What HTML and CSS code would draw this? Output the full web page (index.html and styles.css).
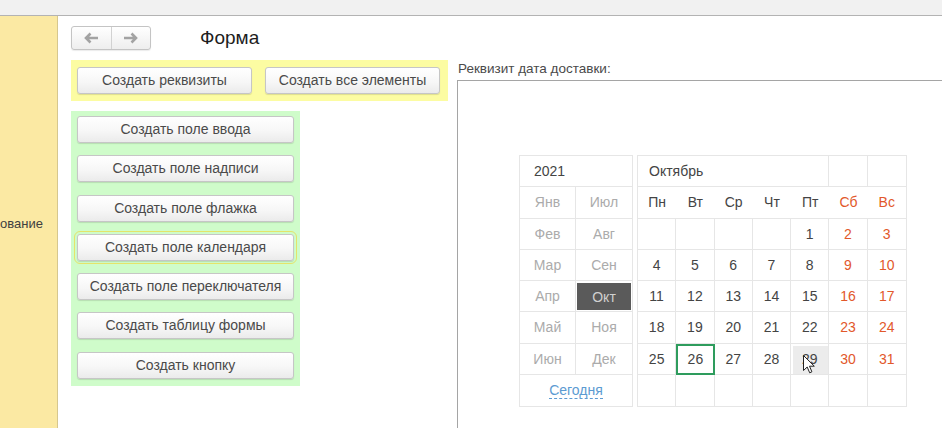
FILE: index.html
```html
<!DOCTYPE html>
<html lang="ru">
<head>
<meta charset="utf-8">
<title>Форма</title>
<link rel="stylesheet" href="styles.css">
</head>
<body>
<div class="app">
  <div class="topbar"></div>
  <div class="workspace">
    <aside class="side"><span class="side-text">ование</span></aside>
    <main class="main">
      <div class="header">
        <div class="nav">
          <button class="nav-btn" type="button" aria-label="Назад">
            <svg width="16" height="12" viewBox="0 0 16 12"><path d="M15 6H3M7.5 1.5L3 6l4.5 4.5" fill="none" stroke="#a3a3a3" stroke-width="2.6"/></svg>
          </button>
          <button class="nav-btn" type="button" aria-label="Вперёд">
            <svg width="16" height="12" viewBox="0 0 16 12"><path d="M1 6h12M8.5 1.5L13 6l-4.5 4.5" fill="none" stroke="#a3a3a3" stroke-width="2.6"/></svg>
          </button>
        </div>
        <h1 class="title">Форма</h1>
      </div>
      <div class="content">
        <div class="left">
          <div class="group group-yellow">
            <button class="btn btn-wide" type="button">Создать реквизиты</button>
            <button class="btn btn-wide" type="button">Создать все элементы</button>
          </div>
          <div class="group group-green">
            <button class="btn" type="button">Создать поле ввода</button>
            <button class="btn" type="button">Создать поле надписи</button>
            <button class="btn" type="button">Создать поле флажка</button>
            <button class="btn btn-focus" type="button">Создать поле календаря</button>
            <button class="btn" type="button">Создать поле переключателя</button>
            <button class="btn" type="button">Создать таблицу формы</button>
            <button class="btn" type="button">Создать кнопку</button>
          </div>
        </div>
        <div class="right">
          <div class="field-label">Реквизит дата доставки:</div>
          <div class="field">
            <div class="calendar">
              <div class="months">
                <div class="m-head">2021</div>
                <div class="m l">Янв</div><div class="m">Июл</div>
                <div class="m l">Фев</div><div class="m">Авг</div>
                <div class="m l">Мар</div><div class="m">Сен</div>
                <div class="m l">Апр</div><div class="m sel"><span>Окт</span></div>
                <div class="m l">Май</div><div class="m">Ноя</div>
                <div class="m l">Июн</div><div class="m">Дек</div>
                <div class="m-today"><a class="today-link" href="#">Сегодня</a></div>
              </div>
              <div class="days">
                <div class="d-head">Октябрь</div><div class="d-hcell r"></div><div class="d-hcell"></div>
                <div class="dn">Пн</div><div class="dn">Вт</div><div class="dn">Ср</div><div class="dn">Чт</div><div class="dn">Пт</div><div class="dn we">Сб</div><div class="dn we">Вс</div>

                <div class="d r"></div><div class="d r"></div><div class="d r"></div><div class="d r"></div><div class="d r">1</div><div class="d r we">2</div><div class="d we">3</div>
                <div class="d r">4</div><div class="d r">5</div><div class="d r">6</div><div class="d r">7</div><div class="d r">8</div><div class="d r we">9</div><div class="d we">10</div>
                <div class="d r">11</div><div class="d r">12</div><div class="d r">13</div><div class="d r">14</div><div class="d r">15</div><div class="d r we">16</div><div class="d we">17</div>
                <div class="d r">18</div><div class="d r">19</div><div class="d r">20</div><div class="d r">21</div><div class="d r">22</div><div class="d r we">23</div><div class="d we">24</div>
                <div class="d r">25</div><div class="d r today">26</div><div class="d r">27</div><div class="d r">28</div><div class="d r hover">29</div><div class="d r we">30</div><div class="d we">31</div>
                <div class="d r last"></div><div class="d r last"></div><div class="d r last"></div><div class="d r last"></div><div class="d r last"></div><div class="d r last"></div><div class="d last"></div>

                <svg class="cursor" width="12" height="19" viewBox="0 0 12 19"><path d="M0.5 0.5V15.5L4.2 12L6.7 17.8L8.9 16.8L6.5 11.2H11.3Z" fill="#fff" stroke="#222" stroke-width="1"/></svg>
              </div>
            </div>
          </div>
        </div>
      </div>
    </main>
  </div>
</div>
</body>
</html>
```

FILE: styles.css
```css
* { box-sizing: border-box; }
html, body {
  margin: 0;
  padding: 0;
  height: 428px;
  overflow: hidden;
  background: #fff;
  font-family: "Liberation Sans", Arial, sans-serif;
}
.app {
  display: flex;
  flex-direction: column;
  height: 428px;
}
.topbar {
  height: 16px;
  flex: none;
  background: #f1f1f1;
  border-bottom: 1px solid #b3b3b3;
}
.workspace {
  flex: 1;
  display: flex;
  min-height: 0;
}
.side {
  width: 58px;
  flex: none;
  background: #fbe9a3;
  border-right: 1px solid #d6c78e;
  padding-top: 199px;
  overflow: hidden;
}
.side-text {
  display: block;
  font-size: 13px;
  color: #404040;
  line-height: 18px;
  white-space: nowrap;
  margin-left: 0;
}
.main {
  flex: 1;
  min-width: 0;
  padding: 10px 0 0 13px;
  overflow: hidden;
}
.header {
  display: flex;
  align-items: center;
  height: 24px;
}
.nav {
  display: flex;
  width: 80px;
  height: 24px;
  border: 1px solid #c4c4c4;
  border-radius: 3px;
  background: linear-gradient(#ffffff, #eeeeee);
  box-shadow: 0 1px 1px rgba(0,0,0,0.08);
  overflow: hidden;
}
.nav-btn {
  flex: 1;
  border: 0;
  padding: 0;
  margin: 0;
  background: transparent;
  display: flex;
  align-items: center;
  justify-content: center;
}
.nav-btn + .nav-btn { border-left: 1px solid #d2d2d2; }
.title {
  margin: 0 0 0 49px;
  font-size: 19px;
  font-weight: normal;
  color: #1d1d1d;
  line-height: 24px;
}
.content {
  display: flex;
  margin-top: 10px;
  gap: 9px;
}
.left {
  width: 377px;
  flex: none;
  display: flex;
  flex-direction: column;
  align-items: flex-start;
  gap: 10px;
}
.group {
  display: flex;
}
.group-yellow {
  width: 377px;
  background: #fcfca2;
  padding: 7px 8px 7px 6px;
  gap: 13px;
}
.group-green {
  width: 229px;
  flex-direction: column;
  background: #cffcca;
  padding: 5px 6px 7px 6px;
  gap: 12.3px;
}
.btn {
  height: 27px;
  width: 217px;
  border: 1px solid #c6c6c6;
  border-radius: 3px;
  background: linear-gradient(#ffffff 0%, #f7f7f7 55%, #ebebeb 100%);
  box-shadow: 0 1px 1px rgba(0,0,0,0.12);
  font-family: "Liberation Sans", Arial, sans-serif;
  font-size: 14px;
  color: #4a4a4a;
  padding: 0;
  margin: 0;
  line-height: 25px;
}
.btn-wide { width: 175px; }
.btn-focus {
  outline: 1px solid #e4e46a;
  outline-offset: 2px;
}
.right {
  flex: 1;
  min-width: 0;
  display: flex;
  flex-direction: column;
}
.field-label {
  font-size: 13.5px;
  color: #4a4a4a;
  line-height: 18px;
  margin-left: 1px;
}
.field {
  margin-top: 2px;
  width: 600px;
  height: 400px;
  border-top: 1px solid #a5a5a5;
  border-left: 1px solid #a5a5a5;
  padding: 74px 0 0 61px;
}
.calendar {
  display: flex;
  gap: 4px;
  font-size: 14px;
  color: #444;
}
.months {
  display: grid;
  grid-template-columns: 56px 56px;
  grid-template-rows: repeat(8, 31.25px);
  border: 1px solid #e6e6e6;
}
.m-head {
  grid-column: 1 / 3;
  border-bottom: 1px solid #e6e6e6;
  padding-left: 14px;
  display: flex;
  align-items: center;
  color: #444;
}
.m {
  display: flex;
  align-items: center;
  justify-content: center;
  color: #ababab;
  border-bottom: 1px solid #e6e6e6;
}
.m.l { border-right: 1px solid #e6e6e6; }
.m.sel {
  padding: 2px 1px 1px 1px;
}
.m.sel span {
  display: flex;
  width: 100%;
  height: 100%;
  align-items: center;
  justify-content: center;
  background: #5a5a5a;
  color: #d0d0d0;
}
.m-today {
  grid-column: 1 / 3;
  display: flex;
  align-items: center;
  justify-content: center;
}
.today-link {
  color: #5c9bd2;
  text-decoration: none;
  border-bottom: 1px dashed #5c9bd2;
  line-height: 16px;
}
.days {
  position: relative;
  display: grid;
  grid-template-columns: repeat(7, 38.28px);
  grid-template-rows: repeat(8, 31.25px);
  border: 1px solid #e6e6e6;
}
.d-head {
  grid-column: 1 / 6;
  border-right: 1px solid #e6e6e6;
  border-bottom: 1px solid #e6e6e6;
  padding-left: 11px;
  display: flex;
  align-items: center;
}
.d-hcell { border-bottom: 1px solid #e6e6e6; }
.d-hcell.r { border-right: 1px solid #e6e6e6; }
.dn {
  display: flex;
  align-items: center;
  justify-content: center;
  border-bottom: 1px solid #e6e6e6;
}
.d {
  display: flex;
  align-items: center;
  justify-content: center;
  border-bottom: 1px solid #e6e6e6;
}
.d.r { border-right: 1px solid #e6e6e6; }
.d.last { border-bottom: 0; }
.we { color: #e2582b; }
.d.today {
  border: 2px solid #2e9c5d;
}
.d.hover {
  background: #ececec;
  box-shadow: inset 2px 2px 0 #fff;
}
.cursor {
  position: absolute;
  left: 165px;
  top: 199px;
}
```
